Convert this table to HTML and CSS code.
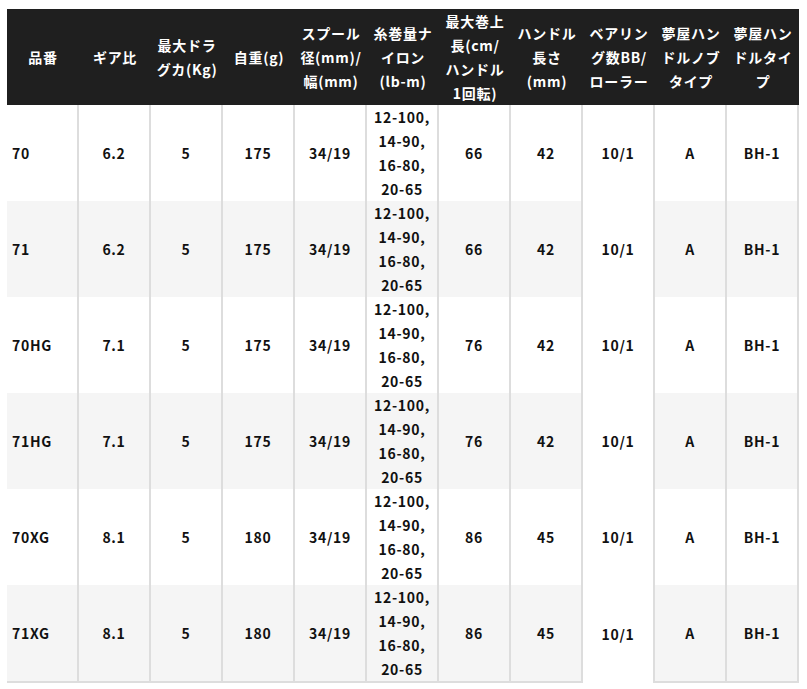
FILE: index.html
```html
<!DOCTYPE html>
<html lang="ja">
<head>
<meta charset="utf-8">
<title>スペック</title>
<link rel="stylesheet" href="styles.css">
</head>
<body>
<div class="wrap">
<table class="spec">
<thead>
<tr>
<th>品番</th>
<th>ギア比</th>
<th>最大ドラ<br>グカ(Kg)</th>
<th>自重(g)</th>
<th>スプール<br>径(mm)/<br>幅(mm)</th>
<th>糸巻量ナ<br>イロン<br>(lb-m)</th>
<th>最大巻上<br>長(cm/<br>ハンドル<br>1回転)</th>
<th>ハンドル<br>長さ<br>(mm)</th>
<th>ベアリン<br>グ数BB/<br>ローラー</th>
<th>夢屋ハン<br>ドルノブ<br>タイプ</th>
<th>夢屋ハン<br>ドルタイ<br>プ</th>
</tr>
</thead>
<tbody>
<tr><td class="name">70</td><td>6.2</td><td>5</td><td>175</td><td>34/19</td><td>12-100,<br>14-90,<br>16-80,<br>20-65</td><td>66</td><td>42</td><td class="bb">10/1</td><td>A</td><td>BH-1</td></tr>
<tr><td class="name">71</td><td>6.2</td><td>5</td><td>175</td><td>34/19</td><td>12-100,<br>14-90,<br>16-80,<br>20-65</td><td>66</td><td>42</td><td class="bb">10/1</td><td>A</td><td>BH-1</td></tr>
<tr><td class="name">70HG</td><td>7.1</td><td>5</td><td>175</td><td>34/19</td><td>12-100,<br>14-90,<br>16-80,<br>20-65</td><td>76</td><td>42</td><td class="bb">10/1</td><td>A</td><td>BH-1</td></tr>
<tr><td class="name">71HG</td><td>7.1</td><td>5</td><td>175</td><td>34/19</td><td>12-100,<br>14-90,<br>16-80,<br>20-65</td><td>76</td><td>42</td><td class="bb">10/1</td><td>A</td><td>BH-1</td></tr>
<tr><td class="name">70XG</td><td>8.1</td><td>5</td><td>180</td><td>34/19</td><td>12-100,<br>14-90,<br>16-80,<br>20-65</td><td>86</td><td>45</td><td class="bb">10/1</td><td>A</td><td>BH-1</td></tr>
<tr><td class="name">71XG</td><td>8.1</td><td>5</td><td>180</td><td>34/19</td><td>12-100,<br>14-90,<br>16-80,<br>20-65</td><td>86</td><td>45</td><td class="bb">10/1</td><td>A</td><td>BH-1</td></tr>
</tbody>
</table>
</div>
</body>
</html>
```
FILE: styles.css
```css
html, body {
  margin: 0;
  padding: 0;
  background: #fff;
}
.wrap {
  padding: 9px 7px;
}
.spec {
  border-collapse: separate;
  border-spacing: 0;
  table-layout: fixed;
  width: 792px;
  font-family: "Noto Sans CJK JP", "Noto Sans", sans-serif;
  font-weight: bold;
  font-size: 14px;
  line-height: 24px;
  letter-spacing: 0.7px;
  color: #111;
}
.spec th {
  background: #1f1f1f;
  color: #fff;
  height: 96px;
  padding: 0 4px;
  text-align: center;
  vertical-align: middle;
  font-weight: bold;
  white-space: nowrap;
}
.spec td {
  height: 96px;
  padding: 0 4px;
  text-align: center;
  vertical-align: middle;
  border-right: 2px solid #dddddd;
  box-sizing: border-box;
}
.spec tbody tr:nth-child(even) td {
  background: #f5f5f5;
}
.spec tbody tr:last-child td {
  border-bottom: 2px solid #dddddd;
}
.spec td.name {
  text-align: left;
  padding-left: 5px;
}
.spec tbody tr td.bb {
  background: #fff;
  border-bottom: none;
}
```
